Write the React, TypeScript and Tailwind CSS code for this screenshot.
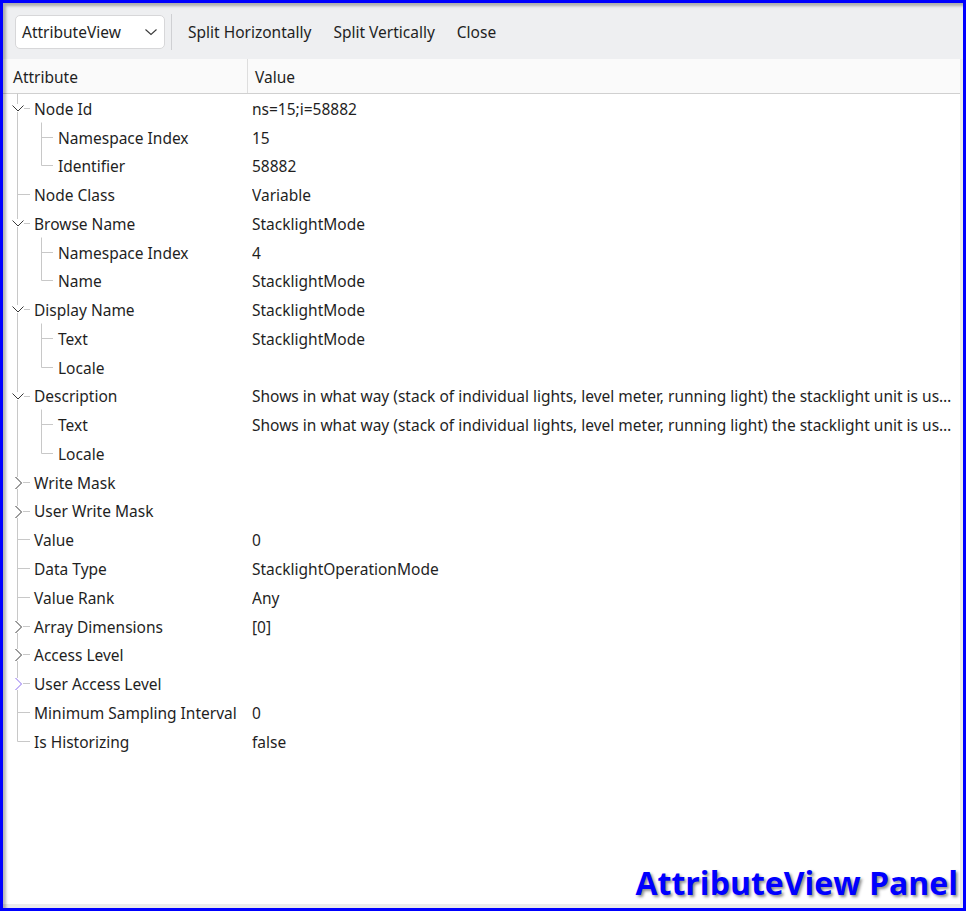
import React from "react";

type Row = {
  label: string;
  value?: string;
  level: 0 | 1;
  exp?: "down" | "right";
  lastChild?: boolean;
  last?: boolean;
  hover?: boolean;
};

const rows: Row[] = [
  { label: "Node Id", value: "ns=15;i=58882", level: 0, exp: "down" },
  { label: "Namespace Index", value: "15", level: 1 },
  { label: "Identifier", value: "58882", level: 1, lastChild: true },
  { label: "Node Class", value: "Variable", level: 0 },
  { label: "Browse Name", value: "StacklightMode", level: 0, exp: "down" },
  { label: "Namespace Index", value: "4", level: 1 },
  { label: "Name", value: "StacklightMode", level: 1, lastChild: true },
  { label: "Display Name", value: "StacklightMode", level: 0, exp: "down" },
  { label: "Text", value: "StacklightMode", level: 1 },
  { label: "Locale", value: "", level: 1, lastChild: true },
  {
    label: "Description",
    value:
      "Shows in what way (stack of individual lights, level meter, running light) the stacklight unit is used.",
    level: 0,
    exp: "down",
  },
  {
    label: "Text",
    value:
      "Shows in what way (stack of individual lights, level meter, running light) the stacklight unit is used.",
    level: 1,
  },
  { label: "Locale", value: "", level: 1, lastChild: true },
  { label: "Write Mask", value: "", level: 0, exp: "right" },
  { label: "User Write Mask", value: "", level: 0, exp: "right" },
  { label: "Value", value: "0", level: 0 },
  { label: "Data Type", value: "StacklightOperationMode", level: 0 },
  { label: "Value Rank", value: "Any", level: 0 },
  { label: "Array Dimensions", value: "[0]", level: 0, exp: "right" },
  { label: "Access Level", value: "", level: 0, exp: "right" },
  { label: "User Access Level", value: "", level: 0, exp: "right", hover: true },
  { label: "Minimum Sampling Interval", value: "0", level: 0 },
  { label: "Is Historizing", value: "false", level: 0, last: true },
];

const LINE = "#c8c8c8";

function Gutter({ r }: { r: Row }) {
  const w = r.level === 0 ? 31 : 55;
  const cy = 14.5;
  const mainX = 14.5;
  const childX = 38.5;
  return (
    <svg width={w} height={29} className="shrink-0 overflow-visible">
      <line x1={mainX} y1={-0.5} x2={mainX} y2={r.last ? cy : 29.5} stroke={LINE} strokeWidth={1} />
      {r.level === 0 && (
        <line x1={r.exp === "down" ? 21 : r.exp === "right" ? 19 : mainX} y1={cy} x2={27} y2={cy} stroke={LINE} strokeWidth={1} />
      )}
      {r.level === 1 && (
        <>
          <line x1={childX} y1={-0.5} x2={childX} y2={r.lastChild ? cy : 29.5} stroke={LINE} strokeWidth={1} />
          <line x1={childX} y1={cy} x2={50} y2={cy} stroke={LINE} strokeWidth={1} />
        </>
      )}
      {r.exp === "down" && (
        <>
          <rect x={9} y={10} width={12} height={8} fill="#ffffff" />
          <polyline points="9.5,11.5 15,17 20.5,11.5" fill="none" stroke="#3a3a3a" strokeWidth={1} />
        </>
      )}
      {r.exp === "right" && (
        <>
          <rect x={11} y={9} width={9} height={12} fill="#ffffff" />
          <polyline
            points="12.5,9 18.5,15 12.5,21"
            fill="none"
            stroke={r.hover ? "#8a6cf0" : "#3a3a3a"}
            strokeWidth={1}
          />
        </>
      )}
    </svg>
  );
}

export default function App() {
  return (
    <div className="relative w-[966px] h-[911px] border-[3px] border-[#0000ff] bg-[#ebebeb] flex flex-col font-['Noto_Sans',sans-serif] text-[15.5px] text-[#1f1f1f] overflow-hidden">
      {/* toolbar */}
      <div className="h-[56px] shrink-0 bg-[#eeeff1] flex items-start pt-[12px] pl-[12px]">
        <div className="flex items-center h-[34px]">
          <div className="w-[150px] h-[34px] bg-white border border-[#d7d7d9] rounded-[5px] flex items-center justify-between pl-[6px] pr-[6px]">
            <span className="pt-[2px]">AttributeView</span>
            <svg width="14" height="10" viewBox="0 0 14 10">
              <polyline points="1.5,2.5 7,7.5 12.5,2.5" fill="none" stroke="#3a3a3a" strokeWidth="1.1" />
            </svg>
          </div>
          <div className="ml-[6px] w-px h-[36px] bg-[#cfd0d3]" />
          <button className="ml-[6px] px-[10px] h-[34px] pt-[2px]">Split Horizontally</button>
          <button className="ml-[2px] px-[10px] h-[34px] pt-[2px]">Split Vertically</button>
          <button className="ml-[2px] px-[10px] h-[34px] pt-[2px]">Close</button>
        </div>
      </div>

      {/* tree view */}
      <div className="flex-1 mr-[3px] mb-[4px] bg-white flex flex-col">
        <div className="h-[35px] shrink-0 bg-[#fafafa] border-b border-[#d0d0d0] flex">
          <div className="w-[245px] border-r border-[#dedede] pl-[10px] pt-[3px] flex items-center">Attribute</div>
          <div className="pl-[7px] pt-[3px] flex items-center">Value</div>
        </div>
        <div className="flex flex-col">
          {rows.map((r, i) => (
            <div key={i} className="h-[28.77px] flex items-center">
              <div className="w-[249px] shrink-0 flex items-center h-full">
                <Gutter r={r} />
                <span className="whitespace-nowrap pt-[2px]">{r.label}</span>
              </div>
              <div className="flex-1 min-w-0 truncate pr-[3px] pt-[2px]">{r.value}</div>
            </div>
          ))}
        </div>
      </div>

      {/* inner shadow overlay */}
      <div className="pointer-events-none absolute inset-0 shadow-[inset_3px_3px_3px_rgba(0,0,0,0.28)]" />

      {/* caption */}
      <div className="absolute right-[5px] bottom-[9px] font-['Open_Sans',sans-serif] font-bold text-[32px] leading-none text-[#0000ff] [text-shadow:2px_2px_3px_rgba(0,0,0,0.45)]">
        AttributeView Panel
      </div>
    </div>
  );
}
